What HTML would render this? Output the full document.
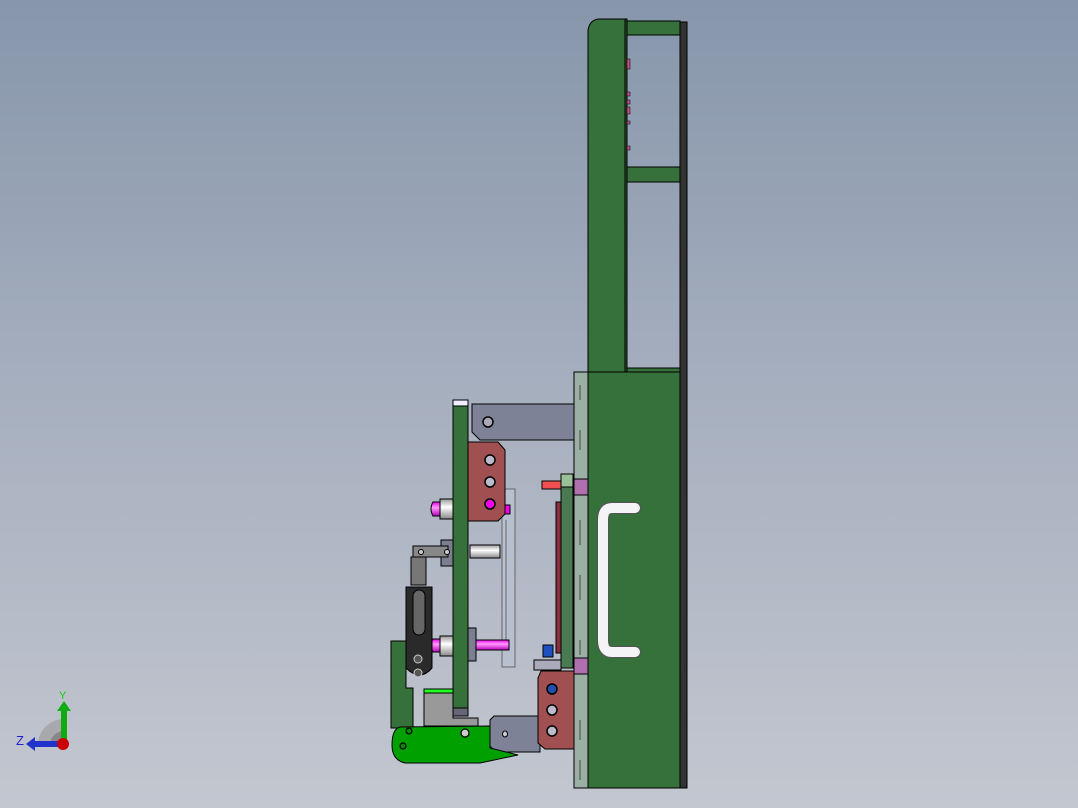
<!DOCTYPE html>
<html><head><meta charset="utf-8"><style>
html,body{margin:0;padding:0;width:1078px;height:808px;overflow:hidden}
body{background:linear-gradient(#8796ab 0%,#a7b0bf 50%,#c3c7d0 100%)}
svg{display:block}
</style></head><body>
<svg width="1078" height="808" viewBox="0 0 1078 808" xmlns="http://www.w3.org/2000/svg" stroke="#000" stroke-width="1">
<defs>
<linearGradient id="tube" x1="0" x2="1"><stop offset="0" stop-color="#ccc"/><stop offset=".4" stop-color="#fff"/><stop offset="1" stop-color="#bbb"/></linearGradient>
<linearGradient id="pin" x1="0" y1="0" x2="0" y2="1"><stop offset="0" stop-color="#e0e"/><stop offset=".4" stop-color="#f9f"/><stop offset="1" stop-color="#b0b"/></linearGradient>
<linearGradient id="sh" x1="0" y1="0" x2="0" y2="1"><stop offset="0" stop-color="#999"/><stop offset=".4" stop-color="#fff"/><stop offset="1" stop-color="#888"/></linearGradient>
</defs>
<!-- upper column -->
<path d="M588 30 Q590 19 600 19 L625 19 L625 372 L588 372 Z" fill="#36703a"/>
<rect x="625" y="19" width="2" height="353" fill="#2a5a2e"/>
<rect x="627" y="21" width="53" height="14" fill="#36703a"/>
<rect x="627" y="167" width="53" height="15" fill="#36703a"/>
<rect x="627" y="368" width="53" height="4" fill="#36703a"/>
<rect x="680" y="22" width="7" height="766" fill="#333"/>
<g fill="#c05080" stroke-width=".5"><rect x="627" y="59" width="3" height="10"/><rect x="627" y="92" width="3" height="4"/><rect x="627" y="100" width="3" height="4"/><rect x="627" y="107" width="3" height="7"/><rect x="627" y="121" width="3" height="3"/><rect x="627" y="146" width="3" height="4"/></g>
<!-- lower plate -->
<rect x="588" y="372" width="92" height="416" fill="#36703a"/>
<rect x="574" y="372" width="14" height="416" fill="#9ab0a4"/>
<g stroke="#333" stroke-width=".8"><line x1="580" y1="385" x2="580" y2="400"/><line x1="580" y1="430" x2="580" y2="450"/><line x1="580" y1="520" x2="580" y2="545"/><line x1="580" y1="575" x2="580" y2="600"/><line x1="580" y1="640" x2="580" y2="655"/><line x1="580" y1="720" x2="580" y2="740"/><line x1="580" y1="760" x2="580" y2="780"/></g>
<!-- handle -->
<path d="M635 508 L612 508 Q603 508 603 520 L603 640 Q603 652 612 652 L635 652" fill="none" stroke="#555" stroke-width="12" stroke-linecap="round"/>
<path d="M635 508 L612 508 Q603 508 603 520 L603 640 Q603 652 612 652 L635 652" fill="none" stroke="#f4f4f6" stroke-width="10" stroke-linecap="round"/>
<!-- bushings -->
<rect x="574" y="479" width="14" height="16" fill="#b070b0"/>
<rect x="574" y="658" width="14" height="16" fill="#b070b0"/>
<!-- thin green plate & pcb -->
<rect x="561" y="474" width="12" height="194" fill="#4a7a52"/>
<rect x="561" y="474" width="12" height="13" fill="#9ac098"/>
<rect x="556" y="502" width="5" height="151" fill="#883040"/>
<rect x="542" y="481" width="19" height="8" fill="#f05050"/>
<rect x="543" y="645" width="10" height="12" fill="#2050c0"/>
<rect x="534" y="660" width="27" height="10" fill="#aab"/>
<!-- transparent plate -->
<rect x="502" y="489" width="13" height="178" fill="#b8c0d0" stroke="#666"/>
<line x1="506" y1="520" x2="506" y2="640" stroke="#666"/>
<!-- top gray arm -->
<path d="M472 404 L574 404 L574 440 L480 440 L472 432 Z" fill="#7e8296"/>
<circle cx="488" cy="422" r="5" fill="#aab" stroke-width="1.5"/>
<!-- main green plate -->
<rect x="453" y="400" width="15" height="316" fill="#36703a"/>
<rect x="453" y="400" width="15" height="6" fill="#eef"/>
<rect x="453" y="708" width="15" height="8" fill="#667"/>
<!-- red block top -->
<path d="M468 442 L498 442 L505 450 L505 514 L498 521 L468 521 Z" fill="#a05050"/>
<g fill="#bbc" stroke-width="1.5"><circle cx="490" cy="460" r="5"/><circle cx="490" cy="482" r="5"/><circle cx="490" cy="504" r="5" fill="#e0e"/></g>
<rect x="505" y="505" width="5" height="9" fill="#e0e"/>
<!-- pins left -->
<rect x="440" y="499" width="13" height="20" fill="url(#sh)"/>
<path d="M440 502 L433 502 Q429 509 433 516 L440 516 Z" fill="url(#pin)"/>
<rect x="440" y="636" width="13" height="20" fill="url(#sh)"/>
<path d="M440 639 L433 639 Q429 645 433 652 L440 652 Z" fill="url(#pin)"/>
<rect x="468" y="628" width="8" height="33" fill="#7a7e90"/>
<rect x="476" y="640" width="33" height="10" fill="url(#pin)"/>
<!-- white shaft -->
<rect x="470" y="545" width="30" height="13" fill="url(#sh)"/>
<!-- left linkage -->
<rect x="441" y="540" width="12" height="26" fill="#7a7e90"/>
<path d="M413 546 L448 546 L448 557 L413 557 Z" fill="#888" />
<circle cx="421" cy="552" r="2.5" fill="#ccc"/><circle cx="447" cy="552" r="2.5" fill="#ccc"/>
<rect x="411" y="557" width="15" height="28" fill="#777"/>
<path d="M406 587 L432 587 L432 668 Q420 682 406 668 Z" fill="#2a2a2a"/>
<rect x="413" y="590" width="12" height="45" rx="6" fill="#666"/>
<circle cx="418" cy="659" r="4" fill="#555" stroke="#ccc"/><circle cx="418" cy="673" r="4" fill="#555" stroke="#ccc"/>
<path d="M391 641 L406 641 L406 688 L413 688 L413 728 L391 728 Z" fill="#36703a"/>
<!-- bottom bracket -->
<path d="M424 690 L453 690 L453 718 L478 718 L478 726 L424 726 Z" fill="#999"/>
<rect x="424" y="689" width="29" height="4" fill="#2f2"/>
<!-- bottom gray arm -->
<path d="M494 716 L540 716 L540 752 L495 752 L490 746 L490 720 Z" fill="#7e8296"/>
<ellipse cx="505" cy="734" rx="2.5" ry="3" fill="#ccc"/>
<!-- green bottom arm -->
<path d="M400 727 L490 726 L490 748 L518 755 L480 763 L405 763 Q392 760 392 745 Q392 729 400 727 Z" fill="#00a000"/>
<circle cx="409" cy="731" r="3" fill="#080" stroke-width="1.2"/><circle cx="465" cy="733" r="4" fill="#ccc" stroke-width="1.2"/><circle cx="403" cy="746" r="3" fill="#080" stroke-width="1.2"/>
<!-- red block bottom -->
<path d="M541 671 L574 671 L574 749 L545 749 L538 743 L538 678 Z" fill="#a05050"/>
<g fill="#bbc" stroke-width="1.5"><circle cx="552" cy="689" r="5" fill="#2050b0"/><circle cx="552" cy="710" r="5"/><circle cx="552" cy="731" r="5"/></g>
<!-- triad -->
<g stroke="none">
<path d="M38 745 A26 26 0 0 1 64 719 L64 745 Z" fill="#a8a8ad"/>
<path d="M50 745 A14 14 0 0 1 64 731 L64 745 Z" fill="#888"/>
<rect x="61" y="710" width="6" height="35" fill="#1a1"/><path d="M57 711 L64 701 L71 711 Z" fill="#1a1"/>
<rect x="34" y="741" width="30" height="6" fill="#2233cc"/><path d="M35 737 L26 744 L35 751 Z" fill="#2233cc"/>
<circle cx="63" cy="744" r="6" fill="#c00"/>
</g>
<text x="59" y="699" font-family="Liberation Sans,sans-serif" font-size="11" fill="#1c1" stroke="none">Y</text>
<text x="16" y="745" font-family="Liberation Sans,sans-serif" font-size="13" fill="#22c" stroke="none">Z</text>
</svg>
</body></html>
